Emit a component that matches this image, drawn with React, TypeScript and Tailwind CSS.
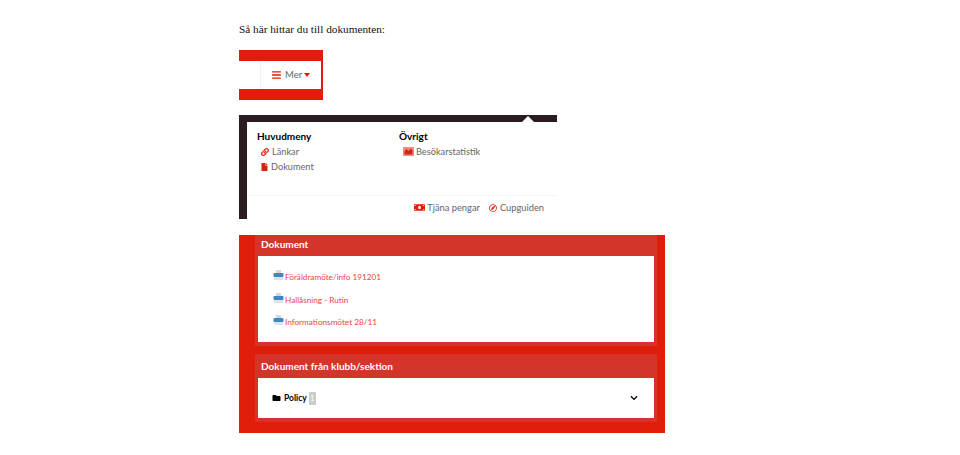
import { FaBars, FaChevronDown, FaFile, FaFolder, FaLink, FaMoneyBill, FaRegCompass } from "react-icons/fa";

const docs = ["Föräldramöte/info 191201", "Hallåsning - Rutin", "Informationsmötet 28/11"];

function PrinterIcon() {
  return (
    <svg width="11" height="11" viewBox="0 0 11 11" className="shrink-0">
      <rect x="3" y="0" width="5" height="3.5" fill="#d4d8dc" />
      <rect x="0.5" y="3" width="10" height="4" rx="1" fill="#3f86c4" />
      <rect x="1" y="7" width="9" height="3" fill="#dfe3e6" />
    </svg>
  );
}

function ChartIcon() {
  return (
    <svg width="11" height="9" viewBox="0 0 11 9" className="shrink-0">
      <rect width="11" height="9" fill="#ef8d80" />
      <path d="M1.5 7.5V4l2-2 2 2 2-2.5 2 1.500v4.500z" fill="#d3251a" />
    </svg>
  );
}

export default function App() {
  return (
    <div className="w-[960px] h-[455px] bg-white overflow-hidden pl-[239px] pt-[22px] font-['Lato',sans-serif]">
      <p className="font-['Liberation_Serif',serif] text-[11.25px] leading-[14px] text-[#111] h-[28px]">
        Så här hittar du till dokumenten:
      </p>

      {/* Mer button crop */}
      <div className="w-[84px] h-[50px] bg-[#e01d0a] pt-[11px] pr-[2px]">
        <div className="h-[28px] bg-white flex justify-end">
          <div className="w-[61px] border-l border-[#f3f3f3] flex items-center pl-[11px] text-[#666] text-[9.5px]">
            <FaBars className="w-[9px] h-[10px] text-[#e01d0a]" />
            <span className="ml-[4px]">Mer</span>
            <span className="ml-[2px] w-0 h-0 border-x-[3px] border-x-transparent border-t-[4px] border-t-[#e01d0a]" />
          </div>
        </div>
      </div>

      {/* Menu crop */}
      <div className="relative w-[318px] h-[104px] mt-[15px] bg-[#2b1c1f] pl-[8px] pt-[7px]">
        <span className="absolute right-[23px] top-[1px] w-0 h-0 border-x-[6px] border-x-transparent border-b-[6px] border-b-white" />
        <div className="bg-white h-[97px] flex flex-col">
          <div className="flex h-[73px] pt-[8px] pl-[10px]">
            <div className="w-[142px]">
              <h3 className="text-[10px] leading-[13px] font-bold text-black">Huvudmeny</h3>
              <div className="flex items-center gap-[3px] pl-[4px] mt-[1px] h-[15px] text-[9.2px] text-[#666]">
                <FaLink className="w-[8px] h-[8px] text-[#e01d0a]" />
                <span>Länkar</span>
              </div>
              <div className="flex items-center gap-[3px] pl-[4px] h-[15px] text-[9.2px] text-[#666]">
                <FaFile className="w-[7px] h-[8px] text-[#e01d0a]" />
                <span>Dokument</span>
              </div>
            </div>
            <div>
              <h3 className="text-[10px] leading-[13px] font-bold text-black">Övrigt</h3>
              <div className="flex items-center gap-[2px] pl-[4px] mt-[1px] h-[15px] text-[9.2px] text-[#666]">
                <ChartIcon />
                <span>Besökarstatistik</span>
              </div>
            </div>
          </div>
          <div className="flex-1 border-t border-[#f5f5f5] flex justify-end items-center gap-[9px] pr-[13px] text-[9.3px] text-[#666]">
            <span className="flex items-center gap-[2px]">
              <FaMoneyBill className="w-[11px] h-[9px] text-[#e01d0a]" />
              Tjäna pengar
            </span>
            <span className="flex items-center gap-[3px]">
              <FaRegCompass className="w-[8px] h-[8px] text-[#e01d0a]" />
              Cupguiden
            </span>
          </div>
        </div>
      </div>

      {/* Document panels crop */}
      <div className="w-[426px] h-[198px] mt-[16px] bg-[#e01d0a] pl-[16px] pr-[8px] flex flex-col gap-[8px]">
        <section className="bg-[#d3352a] h-[111px] px-[3px] flex flex-col">
          <h2 className="h-[21px] leading-[19px] px-[3px] text-[10px] font-bold text-white">Dokument</h2>
          <div className="bg-white h-[86px] pl-[15px] pt-[14px] flex flex-col gap-[7.500px]">
            {docs.map((doc) => (
              <div key={doc} className="flex items-start gap-[1px] h-[15px] text-[8.2px] leading-[14px] text-[#f0433a]">
                <PrinterIcon />
                <span>{doc}</span>
              </div>
            ))}
          </div>
        </section>
        <section className="bg-[#d3352a] h-[68px] px-[3px] flex flex-col">
          <h2 className="h-[24px] leading-[24px] px-[3px] text-[10px] font-bold text-white">Dokument från klubb/sektion</h2>
          <div className="bg-white h-[40px] pl-[14px] pr-[15px] flex items-center">
            <FaFolder className="w-[9px] h-[8px] text-black" />
            <span className="ml-[3px] text-[8.5px] font-bold text-black">Policy</span>
            <span className="ml-[2px] w-[7px] h-[13px] bg-[#ccc] text-white text-[7px] leading-[13px] text-center">1</span>
            <FaChevronDown className="ml-auto w-[10px] h-[8px] text-black" />
          </div>
        </section>
      </div>
    </div>
  );
}
